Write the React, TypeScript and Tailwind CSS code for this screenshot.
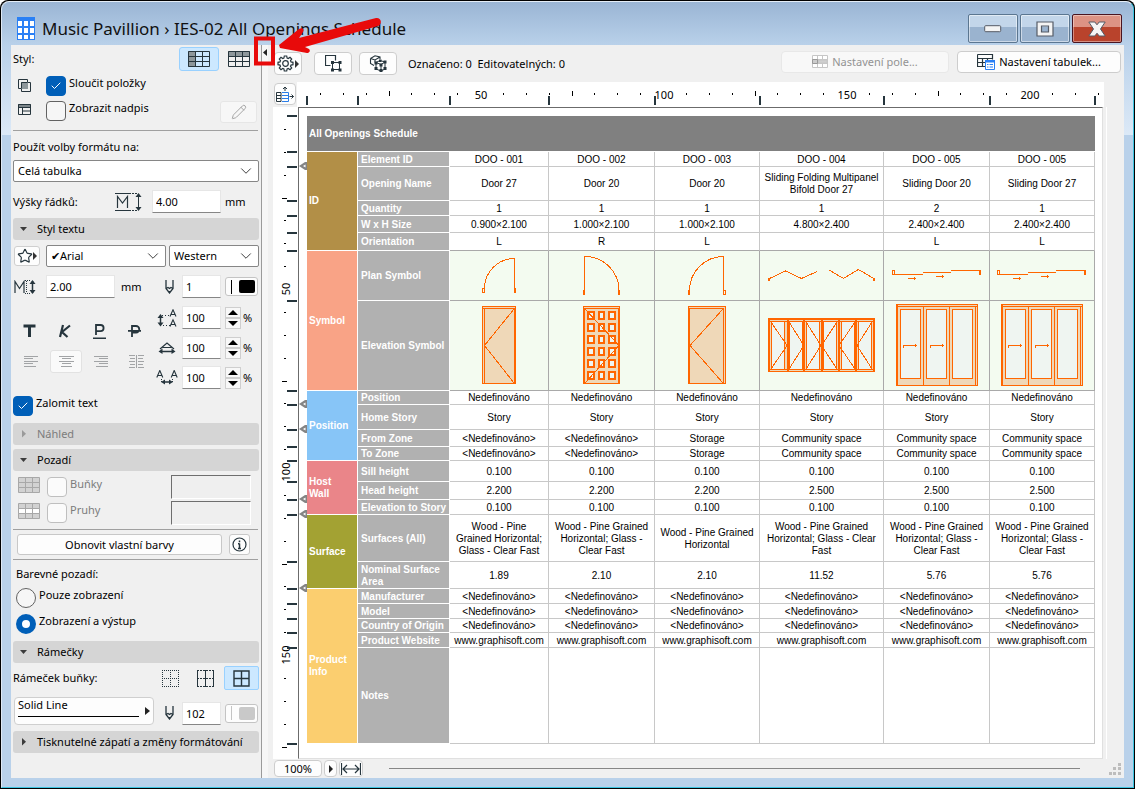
import React, { useState } from 'react';
import clsx from 'clsx';
import { Check, ChevronDown, Pencil, Star } from 'lucide-react';

const INK = '#26353d';
const ORANGE = '#ff6600';
const WOOD = '#efd8b8';
const GLASS = '#eff5f1';

/* ---------- small controls ---------- */

const Divider = () => <hr className="mr-px ml-0.5 border-t border-[#a0a0a0]" />;

interface SectionProps {
  title: string;
  open?: boolean;
  disabled?: boolean;
}

const SectionHeader: React.FC<SectionProps> = ({ title, open = false, disabled = false }) => (
  <button
    type="button"
    disabled={disabled}
    aria-expanded={open}
    className="ml-0.5 flex h-[22px] shrink-0 items-center rounded-[3px] bg-[#d5d5d5] pl-[7px] whitespace-nowrap disabled:text-[#7c7c7c]"
  >
    <svg width="8" height="8" viewBox="0 0 8 8" className={disabled ? 'fill-[#9a9a9a]' : 'fill-[#3c3c3c]'}>
      <path d={open ? 'M0 2h7L3.5 6z' : 'M2 0v7.5L6 3.8z'} />
    </svg>
    <span className="ml-[9px]">{title}</span>
  </button>
);

interface CheckboxProps {
  id: string;
  label: string;
  defaultChecked?: boolean;
  disabled?: boolean;
}

const Checkbox: React.FC<CheckboxProps> = ({ id, label, defaultChecked, disabled }) => (
  <div className="flex items-start">
    <span className="relative block size-5">
      <input
        id={id}
        type="checkbox"
        defaultChecked={defaultChecked}
        disabled={disabled}
        className="peer block size-5 appearance-none rounded-[4px] border border-[#626262] bg-[#f6f6f6] checked:border-[#005fb8] checked:bg-[#005fb8] disabled:border-[#bfbfbf] disabled:bg-[#fbfbfb]"
      />
      <Check
        size={12}
        strokeWidth={2}
        className="pointer-events-none absolute top-1 left-1 hidden text-white peer-checked:block"
      />
    </span>
    <label htmlFor={id} className={clsx('ml-[3px] leading-[14px]', disabled && 'text-[#7c7c7c]')}>
      {label}
    </label>
  </div>
);

interface SelectProps {
  label: string;
  options: string[];
  className?: string;
}

const Select: React.FC<SelectProps> = ({ label, options, className }) => (
  <span className={clsx('relative block', className)}>
    <select
      aria-label={label}
      className="block h-[22px] w-full appearance-none rounded-[2px] border border-[#868686] bg-white pl-1 text-black"
    >
      {options.map((option) => (
        <option key={option}>{option}</option>
      ))}
    </select>
    <ChevronDown size={18} strokeWidth={1.25} className="pointer-events-none absolute top-0.5 right-1 text-[#333]" />
  </span>
);

interface NumberBoxProps {
  label: string;
  value: string;
  className?: string;
}

const NumberBox: React.FC<NumberBoxProps> = ({ label, value, className }) => (
  <input
    aria-label={label}
    defaultValue={value}
    className={clsx('h-[23px] border border-[#e6e6e6] border-b-[#868686] bg-white pl-[3px]', className)}
  />
);

const Spinner = ({ label }: { label: string }) => (
  <span className="ml-1 flex w-4 flex-col">
    <button type="button" aria-label={`${label} +`} className="flex h-[11px] items-center justify-center border border-[#cfcfcf] bg-[#f8f8f8]">
      <svg width="10" height="5" viewBox="0 0 10 5"><path d="M0 5L5 0l5 5z" /></svg>
    </button>
    <button type="button" aria-label={`${label} -`} className="flex h-[11px] items-center justify-center border border-[#cfcfcf] bg-[#f8f8f8]">
      <svg width="10" height="5" viewBox="0 0 10 5"><path d="M0 0h10L5 5z" /></svg>
    </button>
  </span>
);

const PenColor = ({ label, muted = false }: { label: string; muted?: boolean }) => (
  <button
    type="button"
    aria-label={label}
    className="ml-1 flex h-[19px] w-[33px] items-center justify-between rounded-[3px] border border-[#c4c4c4] bg-[#fdfdfd] pr-0.5 pl-[5px]"
  >
    <span className={clsx('h-3.5 w-px', muted ? 'bg-[#c4c4c4]' : 'bg-black')} />
    <span className={clsx('h-[13px] w-4 rounded-[2px]', muted ? 'bg-[#c9c9c9]' : 'bg-black')} />
  </button>
);

/* ---------- icons ---------- */

const GridIcon = ({ variant }: { variant: 'left' | 'top' }) => (
  <svg width="22" height="16" viewBox="0 0 22 16" fill="none" stroke={INK}>
    <path d={variant === 'left' ? 'M0 0h8v16H0z' : 'M0 0h22v6H0z'} fill="#8e979b" stroke="none" />
    <path d="M.5.5h21v15H.5zM.5 5.5h21M.5 10.5h21M7.5.5v15M14.5.5v15" />
  </svg>
);

const MutedGrid = ({ stripes = false }: { stripes?: boolean }) => (
  <svg width="22" height="16" viewBox="0 0 22 16" fill="#d2d2d2" stroke="#a8a8a8">
    <path d="M.5.5h21v15H.5z" />
    {stripes && <path d="M.5 5.5h21v5H.5z" fill="#fff" />}
    <path d="M.5 5.5h21M.5 10.5h21M7.5.5v15M14.5.5v15" />
  </svg>
);

const MergeIcon = () => (
  <svg width="13" height="13" viewBox="0 0 13 13" fill="none" stroke={INK}>
    <path d="M3.500 9.500h-3v-9h9v3" />
    <path d="M3.500 3.500h9v9h-9z" />
    <path d="M3 3h7v7H3z" fill="#8e979b" stroke="none" />
    <path d="M3.500 9.500V3.500h6" />
  </svg>
);

const TitleRowIcon = () => (
  <svg width="13" height="11" viewBox="0 0 13 11" fill="none" stroke={INK}>
    <path d="M0 0h13v4H0z" fill="#7d868a" stroke="none" />
    <path d="M.5.5h12v10H.5zM.5 3.500h12M4.500 3.500v7M4.500 7h8" />
  </svg>
);

const PenIcon = () => (
  <svg width="9" height="14" viewBox="0 0 9 14" fill="none" stroke={INK} strokeWidth="1.300">
    <path d="M1 0v8.500L4.500 13 8 8.500V0M1 8.500l2-1 1.500 1 1.500-1 2 1M4.500 11v2" />
  </svg>
);

const RowHeightIcon = () => (
  <svg width="27" height="18" viewBox="0 0 27 18" fill="none" stroke={INK}>
    <path d="M0 .5h14M0 17.500h14" />
    <path d="M14 .5h9M14 17.500h9" strokeDasharray="2 1" />
    <path d="M2.500 15V3.500L7.500 10l5-6.500V15" strokeWidth="1.200" />
    <path d="M23.500 2v14" />
    <path d="M20.500 4l3-4 3 4zM20.500 14l3 4 3-4z" fill={INK} stroke="none" />
  </svg>
);

const TextHeightIcon = () => (
  <svg width="22" height="14" viewBox="0 0 22 14" fill="none" stroke={INK}>
    <path d="M1 13V1.500l4.500 7 4.500-7V13" strokeWidth="1.200" />
    <path d="M11 .5h6M11 13.500h6" strokeDasharray="1 1" />
    <path d="M12.500 1v12" strokeDasharray="1 1" />
    <path d="M18.500 1v12" strokeWidth="1.500" />
    <path d="M15.500 4l3-4 3 4zM15.500 10l3 4 3-4z" fill={INK} stroke="none" />
  </svg>
);

const LineSpacingIcon = () => (
  <svg width="21" height="18" viewBox="0 0 21 18" fill="none" stroke={INK}>
    <path d="M13 7.500L16 .8l3 6.700M14 5.500h4M13 17.500l3-6.700 3 6.700M14 15.500h4" strokeWidth="1.100" />
    <path d="M5 6.500h8M6 16.500h7" strokeDasharray="1 2" />
    <path d="M3.500 8v7" strokeWidth="1.500" />
    <path d="M.5 9l3-4 3 4zM.5 13.500l3 4 3-4z" fill={INK} stroke="none" />
  </svg>
);

const WidthFactorIcon = () => (
  <svg width="18" height="12" viewBox="0 0 18 12" fill="none" stroke={INK}>
    <path d="M2 7L9 1l7 6M4.500 5.500h9" strokeWidth="1.200" />
    <path d="M3 9.500h12" strokeWidth="1.500" />
    <path d="M4.500 6.500l-4 3 4 2.500zM13.500 6.500l4 3-4 2.500z" fill={INK} stroke="none" />
  </svg>
);

const CharSpacingIcon = () => (
  <svg width="22" height="15" viewBox="0 0 22 15" fill="none" stroke={INK}>
    <path d="M.8 7.500l3-7 3 7M2 5.500h4M15.200 7.500l3-7 3 7M16.200 5.500h4" strokeWidth="1.100" />
    <path d="M5.500 9v3M16.500 9v3" strokeDasharray="1 1" />
    <path d="M7 12h8" strokeWidth="1.500" />
    <path d="M9 9.500l-4 2.500 4 2.500zM13 9.500l4 2.500-4 2.500z" fill={INK} stroke="none" />
  </svg>
);

const AlignIcon = ({ d }: { d: string }) => (
  <svg width="15" height="13" viewBox="0 0 15 13" fill="none" stroke="#a2a4a6">
    <path d={d} />
  </svg>
);

const BorderIcon = ({ variant }: { variant: 'none' | 'columns' | 'all' }) => (
  <svg width="17" height="17" viewBox="0 0 17 17" fill="none" stroke={INK}>
    {variant === 'none' && <path d="M.5 0v17M8.500 0v17M16.500 0v17M0 .5h17M0 8.500h17M0 16.500h17" strokeDasharray="1 1" />}
    {variant === 'columns' && (
      <>
        <path d="M0 .5h17M0 8.500h17M0 16.500h17" strokeDasharray="2 1" />
        <path d="M.5 0v17M8.500 0v17M16.500 0v17" />
      </>
    )}
    {variant === 'all' && <path d="M1 1h15v15H1zM8.500 1v15M1 8.500h15" strokeWidth="1.400" />}
  </svg>
);

const GearIcon = () => (
  <svg width="17" height="17" viewBox="0 0 17 17" fill="none" stroke={INK} strokeWidth="1.200">
    <path d="M7.300 1h2.400l.4 2 1.200.5 1.700-1.200L14.700 4l-1.200 1.700.5 1.200 2 .4v2.400l-2 .4-.5 1.200 1.200 1.700-1.700 1.700-1.700-1.200-1.200.5-.4 2H7.300l-.4-2-1.200-.5L4 14.700 2.300 13l1.200-1.700L3 10.100l-2-.4V7.300l2-.4.5-1.200L2.300 4 4 2.300l1.700 1.200L6.900 3z" />
    <circle cx="8.500" cy="8.500" r="2.800" />
  </svg>
);

const SelectPlanIcon = () => (
  <svg width="17" height="17" viewBox="0 0 17 17" fill="none" stroke={INK}>
    <path d="M5.500 10.500h-5V.5h10v5" strokeWidth="1.200" />
    <path d="M7.500 7.500h7v7h-7z" />
    <path d="M6 6h3v3H6zM13.500 6h3v3h-3zM6 13.500h3v3H6zM13.500 13.500h3v3h-3z" fill={INK} stroke="none" />
  </svg>
);

const SelectModelIcon = () => (
  <svg width="18" height="17" viewBox="0 0 18 17" fill="none" stroke={INK}>
    <path d="M1.500 3.500L6 .8l5 1.200v2M1.500 3.500L6 5l5-3M1.500 3.500v5L5 10.500M6 5v2.500" strokeWidth="1.100" />
    <path d="M7 7.500l4-2 5 1.500v7l-4 2-5-2zM7 7.500l5 2v6.500M12 9.500l4-2.500" />
    <path d="M5.500 6.500h3v3h-3zM10 4.500h2.500V7H10zM14.500 5.500h3v3h-3zM10.500 8.500h3v3h-3zM5.500 12h3v3h-3zM10.500 14h3v3h-3zM14.500 12h3v3h-3z" fill={INK} stroke="none" />
  </svg>
);

const OrientationIcon = () => (
  <svg width="18" height="16" viewBox="0 0 18 16" fill="none">
    <path d="M6 6.500h6.500v9H6M6 9.500h6.500M6 12.500h6.500" stroke="#2a7de8" />
    <path d="M.5 6.500H5v9H.5zM.5 9.500H5M.5 12.500H5M9 5V1M7 3l2-2 2 2M13.500 10.500h4M15.500 8.500l2 2-2 2" stroke={INK} />
  </svg>
);

const FieldSettingsIcon = () => (
  <svg width="16" height="13" viewBox="0 0 16 13" fill="#fff" stroke="#c6c6c6">
    <path d="M.5.5h15v12H.5zM.5 4.500h15M.5 8.500h15M5.500.5v12M10.500.5v12" />
    <path d="M6 5h9v3H6z" fill="#cfcfcf" />
    <path d="M.5 4.500h5v4h-5z" fill="#ccc" stroke="#999" />
  </svg>
);

const TableSettingsIcon = () => (
  <svg width="18" height="16" viewBox="0 0 18 16" fill="none">
    <path d="M.5.5h15v5M.5.5v12H8M.5 4.500h15M.5 8.500H8M5.500 4.500v8M10.500 4.500v2" stroke={INK} strokeWidth="1.200" />
    <path d="M8.500 6.500h9v9h-9z" fill="#fff" stroke="#2a80f5" />
    <path d="M8 6h10v2.500H8zM10 10h1.500v1H10zM12.500 10H16v1h-3.500zM10 12.500h1.500v1H10zM12.500 12.500H16v1h-3.500z" fill="#2a80f5" />
  </svg>
);

/* ---------- door symbols ---------- */

interface SymbolFrameProps {
  width: number;
  height: number;
  children: React.ReactNode;
}

const SymbolFrame: React.FC<SymbolFrameProps> = ({ width, height, children }) => (
  <svg
    width={width}
    height={height}
    viewBox={`0 0 ${width} ${height}`}
    fill="none"
    stroke={ORANGE}
    shapeRendering="crispEdges"
    className="block"
  >
    {children}
  </svg>
);

const SlidingPlan = () => (
  <>
    <path d="M8.500 19.500h2v4h-2zM8 23.500h31M39 21.500h28M67 19.500h30" />
    <path d="M96 19v5" strokeWidth="2" />
    <path d="M24 27.500h8M30.500 26v3M52 25.500h8M58.500 24v3" />
  </>
);

const SlidingElevation = () => (
  <>
    <path d="M12.500 3.500h81v81h-81z" fill={WOOD} />
    <path d="M13 3v82M12 5.500h81M39.500 5.500v79M65.500 5.500v79M91.500 5.500v79" />
    <path d="M13 5v80" strokeWidth="2" />
    <path d="M16.500 8.500h20v69h-20zM42.500 8.500h20v69h-20zM68.500 8.500h20v69h-20z" fill={GLASS} />
    <path d="M19.500 47v-2.500h13M31.500 43v3M46.500 47v-2.500h13M58.500 43v3" />
  </>
);

const planSymbols = [
  <SymbolFrame key="1" width={98} height={49}>
    <path d="M34.500 37A30 30 0 0 1 64.500 7.500V41M32.500 37.500h2v4h-2z" />
    <path d="M65 37v5" strokeWidth="2" />
  </SymbolFrame>,
  <SymbolFrame key="2" width={105} height={49}>
    <path d="M70 39A34 34 0 0 0 35.500 5.500V44" />
    <path d="M35 39v5M70 39v5" strokeWidth="2" />
  </SymbolFrame>,
  <SymbolFrame key="3" width={104} height={49}>
    <path d="M34.500 39A34 34 0 0 1 68.500 5.500V44M68.500 39.500h2v4h-2z" />
    <path d="M34 39v5" strokeWidth="2" />
  </SymbolFrame>,
  <SymbolFrame key="4" width={123} height={49}>
    <path d="M8.500 28L25.500 20 41.500 27.500 57 20.500M69 19l14.500 8.500L98.500 18.500l16 9.500" />
    <path d="M9 27v3M114 27v3" strokeWidth="2" />
  </SymbolFrame>,
  <SymbolFrame key="5" width={105} height={49}>
    <SlidingPlan />
  </SymbolFrame>,
  <SymbolFrame key="6" width={104} height={49}>
    <g transform="translate(-1)">
      <SlidingPlan />
    </g>
  </SymbolFrame>,
];

const elevationSymbols = [
  <SymbolFrame key="1" width={98} height={89}>
    <path d="M32.500 5.500h33v77h-33z" fill={WOOD} />
    <path d="M32 7.500h33M34.500 8v75M64 8L34.500 44.500 64 82" />
    <path d="M65 7v76" strokeWidth="2" />
  </SymbolFrame>,
  <SymbolFrame key="2" width={105} height={89}>
    <path d="M34.500 5.500h36v77h-36z" fill={WOOD} />
    <path d="M34 7.500h36" />
    <path d="M35 7v76M70 7v76" strokeWidth="2" />
    <g fill={GLASS} strokeWidth="2">
      {[11, 23, 35, 47, 59, 71].map((y) => (
        <path key={y} d={`M39 ${y}h6v7h-6zM50 ${y}h5v7h-5zM60 ${y}h6v7h-6z`} />
      ))}
    </g>
    <path d="M36 8l34 36.500L36 82" />
  </SymbolFrame>,
  <SymbolFrame key="3" width={104} height={89}>
    <path d="M33.500 5.500h37v77h-37z" fill={WOOD} />
    <path d="M33 7.500h36M68.500 8v75M68 8L35 44.500 68 82" />
    <path d="M34 7v76" strokeWidth="2" />
  </SymbolFrame>,
  <SymbolFrame key="4" width={123} height={89}>
    <path d="M8.500 17.500h106v53h-106z" fill={WOOD} />
    <path d="M8 18h107M9 17v54M114 17v54" strokeWidth="2" />
    <path d="M9 20.500h105M9 68.500h105" />
    <g fill={GLASS}>
      {[11, 29, 46, 63, 81, 98].map((x) => (
        <path key={x} d={`M${x + 0.5} 20.500h13v48h-13z`} />
      ))}
    </g>
    <path d="M28 19v52M44 19v52M61.500 19v52M79 19v52M96 19v52" strokeWidth="2" />
    <path d="M11 21l16 23.500L11 68M29 21l15 23.500L29 68M46 21l15 23.500L46 68M77 21L61.500 44.500 77 68M95 21L79 44.500 95 68M112 21L97 44.500 112 68" />
  </SymbolFrame>,
  <SymbolFrame key="5" width={105} height={89}>
    <SlidingElevation />
  </SymbolFrame>,
  <SymbolFrame key="6" width={104} height={89}>
    <g transform="translate(-1)">
      <SlidingElevation />
    </g>
  </SymbolFrame>,
];

/* ---------- schedule data ---------- */

interface ScheduleRow {
  label: string;
  height: number;
  cells: React.ReactNode[];
  symbol?: boolean;
}

interface ScheduleGroup {
  title: string;
  color: string;
  rows: ScheduleRow[];
}

const same = (value: string) => Array<string>(6).fill(value);
const undef = '<Nedefinováno>';

const groups: ScheduleGroup[] = [
  {
    title: 'ID',
    color: 'bg-[#b28f47]',
    rows: [
      { label: 'Element ID', height: 15, cells: ['DOO - 001', 'DOO - 002', 'DOO - 003', 'DOO - 004', 'DOO - 005', 'DOO - 005'] },
      { label: 'Opening Name', height: 34, cells: ['Door 27', 'Door 20', 'Door 20', 'Sliding Folding Multipanel Bifold Door 27', 'Sliding Door 20', 'Sliding Door 27'] },
      { label: 'Quantity', height: 15, cells: ['1', '1', '1', '1', '2', '1'] },
      { label: 'W x H Size', height: 17, cells: ['0.900×2.100', '1.000×2.100', '1.000×2.100', '4.800×2.400', '2.400×2.400', '2.400×2.400'] },
      { label: 'Orientation', height: 18, cells: ['L', 'R', 'L', '', 'L', 'L'] },
    ],
  },
  {
    title: 'Symbol',
    color: 'bg-[#f9a386]',
    rows: [
      { label: 'Plan Symbol', height: 50, cells: planSymbols, symbol: true },
      { label: 'Elevation Symbol', height: 90, cells: elevationSymbols, symbol: true },
    ],
  },
  {
    title: 'Position',
    color: 'bg-[#87c5f7]',
    rows: [
      { label: 'Position', height: 14, cells: same('Nedefinováno') },
      { label: 'Home Story', height: 25, cells: same('Story') },
      { label: 'From Zone', height: 17, cells: [undef, undef, 'Storage', 'Community space', 'Community space', 'Community space'] },
      { label: 'To Zone', height: 14, cells: [undef, undef, 'Storage', 'Community space', 'Community space', 'Community space'] },
    ],
  },
  {
    title: 'Host Wall',
    color: 'bg-[#ea8589]',
    rows: [
      { label: 'Sill height', height: 21, cells: same('0.100') },
      { label: 'Head height', height: 18, cells: ['2.200', '2.200', '2.200', '2.500', '2.500', '2.500'] },
      { label: 'Elevation to Story', height: 15, cells: same('0.100') },
    ],
  },
  {
    title: 'Surface',
    color: 'bg-[#a3a233]',
    rows: [
      {
        label: 'Surfaces (All)',
        height: 47,
        cells: [
          'Wood - Pine Grained Horizontal; Glass - Clear Fast',
          'Wood - Pine Grained Horizontal; Glass - Clear Fast',
          'Wood - Pine Grained Horizontal',
          'Wood - Pine Grained Horizontal; Glass - Clear Fast',
          'Wood - Pine Grained Horizontal; Glass - Clear Fast',
          'Wood - Pine Grained Horizontal; Glass - Clear Fast',
        ],
      },
      { label: 'Nominal Surface Area', height: 27, cells: ['1.89', '2.10', '2.10', '11.52', '5.76', '5.76'] },
    ],
  },
  {
    title: 'Product Info',
    color: 'bg-[#fbce6f]',
    rows: [
      { label: 'Manufacturer', height: 15, cells: same(undef) },
      { label: 'Model', height: 15, cells: same(undef) },
      { label: 'Country of Origin', height: 14, cells: same(undef) },
      { label: 'Product Website', height: 15, cells: same('www.graphisoft.com') },
      { label: 'Notes', height: 96, cells: same('') },
    ],
  },
];

const columnWidths = [51, 92, 99, 106, 105, 124, 106, 105];
const TITLE_HEIGHT = 36;

const runningTotals = (start: number, sizes: number[]) =>
  sizes.reduce<number[]>((acc, size) => [...acc, acc[acc.length - 1] + size], [start]);

const columnEdges = runningTotals(9, columnWidths);
const rowEdges = runningTotals(9, [TITLE_HEIGHT, ...groups.flatMap((g) => g.rows.map((r) => r.height))]);

/* ---------- rulers ---------- */

const STEP = 22.875;

const HorizontalRuler = () => (
  <svg width="807" height="25" viewBox="0 0 807 25" shapeRendering="crispEdges">
    {Array.from({ length: 35 }, (_, i) => i - 7).map((k) => {
      const x = Math.round(183 + k * STEP);
      if (k % 8 === 0) {
        return (
          <text key={k} x={x + 1} y="17" textAnchor="middle" fontSize="11">
            {50 + (k / 8) * 50}
          </text>
        );
      }
      return k % 4 === 0 ? (
        <rect key={k} x={x} y="9" width="1" height="5" />
      ) : (
        <rect key={k} x={x} y="11" width="1" height="2" />
      );
    })}
    {columnEdges.map((x) => (
      <rect key={x} x={x} y="14" width="2" height="9" fill={INK} />
    ))}
  </svg>
);

const VerticalRuler = () => (
  <svg width="25" height="652" viewBox="0 0 25 652" shapeRendering="crispEdges">
    {Array.from({ length: 28 }, (_, i) => i - 7).map((k) => {
      const y = Math.round(182 + k * STEP);
      if (k % 8 === 0) {
        return (
          <text key={k} x="17" y={y} textAnchor="middle" fontSize="11" transform={`rotate(-90 17 ${y})`}>
            {50 + (k / 8) * 50}
          </text>
        );
      }
      return k % 4 === 0 ? (
        <rect key={k} x="9" y={y} width="5" height="1" />
      ) : (
        <rect key={k} x="11" y={y} width="2" height="1" />
      );
    })}
    {rowEdges.map((y) => (
      <rect key={y} x="14" y={y - 1} width="10" height="2" fill={INK} />
    ))}
  </svg>
);

// Handles that mark rows whose height was changed by hand.
const RowHandles = () => (
  <svg width="8" height="628" viewBox="0 0 8 628" className="shrink-0">
    {[50, 288, 313, 383, 398, 472].map((y) => (
      <g key={y} fill="#848484">
        <path d={`M0 ${y}l6-4h2v8H6z`} />
        <path d={`M4 ${y}l2.500-1.500v3z`} fill="#fff" />
      </g>
    ))}
  </svg>
);

const Schedule = () => (
  <table className="w-[788px] table-fixed border-separate border-spacing-0 font-['Liberation_Sans',Arial,sans-serif] text-[10px] leading-[12px]">
    <colgroup>
      {columnWidths.map((width, i) => (
        <col key={i} style={{ width }} />
      ))}
    </colgroup>
    <thead>
      <tr style={{ height: TITLE_HEIGHT }}>
        <th colSpan={8} className="border-b border-white bg-[#808080] p-0 pl-0.5 text-left text-white">
          All Openings Schedule
        </th>
      </tr>
    </thead>
    <tbody>
      {groups.map((group) =>
        group.rows.map((row, i) => (
          <tr key={row.label} style={{ height: row.height }}>
            {i === 0 && (
              <th
                rowSpan={group.rows.length}
                scope="rowgroup"
                className={clsx('border-r border-b border-white p-0 pr-2 pl-0.5 text-left text-white', group.color)}
              >
                {group.title}
              </th>
            )}
            <th scope="row" className="border-r border-b border-white bg-[#b1b1b1] p-0 pt-px pl-[3px] text-left text-white">
              {row.label}
            </th>
            {row.cells.map((cell, c) => (
              <td
                key={c}
                className={clsx(
                  'border-r border-b text-center text-black',
                  row.symbol ? 'border-[#a9a9a9] bg-[#f3fbf0] p-0' : 'border-[#c8c8c8] px-1 pt-px pb-0',
                  row.label === 'Orientation' && 'border-b-[#a9a9a9]'
                )}
              >
                {cell}
              </td>
            ))}
          </tr>
        ))
      )}
    </tbody>
  </table>
);

/* ---------- left panel ---------- */

const formatButtons = [
  { label: 'Bold', glyph: <path d="M.5 3h12M6.500 3v11" strokeWidth="3" /> },
  { label: 'Italic', glyph: <path d="M5 2L2 14M12 2.500L4 9l5.500 5" strokeWidth="2.200" /> },
  { label: 'Underline', glyph: <path d="M3 12V2h4.500a3 3 0 0 1 0 6.200H3M0 15.300h13" strokeWidth="1.800" /> },
  { label: 'Strikethrough', glyph: <path d="M4 14V3h4a3 3 0 0 1 0 6.500H4M0 7.800h13" strokeWidth="1.800" /> },
];

const alignments = [
  { label: 'Left', d: 'M0 1.500h14M0 3.500h9M0 6.500h14M0 8.500h9M0 11.500h12' },
  { label: 'Center', d: 'M0 1.500h15M3 3.500h9M0 6.500h15M3 8.500h9M2 11.500h11' },
  { label: 'Right', d: 'M0 1.500h14M5 3.500h9M0 6.500h14M5 8.500h9M2 11.500h12' },
  { label: 'Justify', d: 'M0 .5h6M9 .5h6M1 3.500h5M9 3.500h5M0 6.500h6M9 6.500h6M1 9.500h5M9 9.500h5M0 12.500h6M9 12.500h6M7.500 0v13' },
];

const spacings = [
  { label: 'Line spacing', icon: <LineSpacingIcon /> },
  { label: 'Width factor', icon: <WidthFactorIcon /> },
  { label: 'Character spacing', icon: <CharSpacingIcon /> },
];

const StylePanel = () => {
  const [align, setAlign] = useState('Center');

  return (
    <aside className="flex w-[251px] shrink-0 flex-col border-r border-[#9a9a9a] pr-0.5">
      <div className="flex h-[31px] items-start pt-0.5 pl-0.5">
        <span className="mt-1">Styl:</span>
        <button type="button" aria-label="Styl 1" aria-pressed="true" className="ml-auto flex h-6 w-10 items-center justify-center rounded-[3px] border border-[#99d1ff] bg-[#cce8ff]">
          <GridIcon variant="left" />
        </button>
        <button type="button" aria-label="Styl 2" className="flex h-6 w-10 items-center justify-center">
          <GridIcon variant="top" />
        </button>
      </div>
      <div className="flex h-[25px] pl-[7px]">
        <span className="mt-[3px] mr-[15px] w-[13px]"><MergeIcon /></span>
        <Checkbox id="merge" label="Sloučit položky" defaultChecked />
      </div>
      <div className="flex h-[29px] pl-[7px]">
        <span className="mt-[3px] mr-[15px] w-[13px]"><TitleRowIcon /></span>
        <Checkbox id="headline" label="Zobrazit nadpis" />
        <button type="button" disabled aria-label="Upravit" className="mr-0.5 ml-auto flex h-[22px] w-[37px] items-center justify-center rounded-[3px] border border-[#e6e6e6] bg-[#f7f7f7] text-[#a5a5a5]">
          <Pencil size={16} strokeWidth={1.5} />
        </button>
      </div>
      <Divider />
      <p className="mt-2 pl-0.5">Použít volby formátu na:</p>
      <Select label="Použít volby formátu na" options={['Celá tabulka']} className="mt-[5px] ml-0.5" />
      <div className="mt-2 flex items-center pl-0.5">
        <span className="w-[102px]">Výšky řádků:</span>
        <RowHeightIcon />
        <NumberBox label="Výšky řádků" value="4.00" className="ml-2.5 w-[69px]" />
        <span className="ml-1">mm</span>
      </div>
      <div className="mt-[5px] flex flex-col">
        <SectionHeader title="Styl textu" open />
      </div>

      <div className="mt-[5px] flex items-center pl-[3px]">
        <button type="button" aria-label="Oblíbené" className="flex h-5 w-[26px] items-center justify-center rounded-[3px] border border-[#cfcfcf] bg-[#fdfdfd]">
          <Star size={16} strokeWidth={1.75} color={INK} />
          <svg width="4" height="8" viewBox="0 0 4 8"><path d="M0 0v8l4-4z" fill="#333" /></svg>
        </button>
        <Select label="Písmo" options={['✔Arial']} className="ml-1.5 w-[120px]" />
        <Select label="Kódování" options={['Western']} className="ml-[3px] flex-1" />
      </div>

      <div className="mt-2 flex items-center pl-[3px]">
        <TextHeightIcon />
        <NumberBox label="Velikost textu" value="2.00" className="ml-2.5 w-[69px]" />
        <span className="ml-1.5">mm</span>
        <span className="ml-auto"><PenIcon /></span>
        <NumberBox label="Pero textu" value="1" className="ml-2 w-[39px]" />
        <PenColor label="Barva pera textu" />
        <span className="w-px" />
      </div>

      <div className="mt-2 flex">
        <div className="flex w-[142px] flex-col pt-4">
          <div className="flex gap-[22px] pl-3">
            {formatButtons.map(({ label, glyph }) => (
              <button key={label} type="button" aria-label={label} className="flex h-[18px] w-[13px] items-center">
                <svg width="13" height="16" viewBox="0 0 13 16" fill="none" stroke={INK}>{glyph}</svg>
              </button>
            ))}
          </div>
          <div className="mt-2.5 flex justify-between pl-1">
            {alignments.map(({ label, d }) => (
              <button
                key={label}
                type="button"
                aria-label={label}
                aria-pressed={align === label}
                onClick={() => setAlign(label)}
                className={clsx(
                  'flex h-[23px] w-8 items-center justify-center rounded-[3px] border',
                  align === label ? 'border-[#e2e2e2] bg-[#fafafa]' : 'border-transparent'
                )}
              >
                <AlignIcon d={d} />
              </button>
            ))}
          </div>
        </div>
        <div className="flex flex-1 flex-col gap-[7px]">
          {spacings.map(({ label, icon }) => (
            <div key={label} className="flex items-center">
              <span className="flex w-[29px] justify-center pr-px">{icon}</span>
              <NumberBox label={label} value="100" className="w-[39px]" />
              <Spinner label={label} />
              <span className="ml-0.5">%</span>
            </div>
          ))}
        </div>
      </div>

      <div className="mt-[7px] pl-0.5">
        <Checkbox id="wrap" label="Zalomit text" defaultChecked />
      </div>

      <div className="mt-[7px] flex flex-col gap-1">
        <SectionHeader title="Náhled" disabled />
        <SectionHeader title="Pozadí" open />
      </div>

      <div className="mt-1 flex h-[26px] pl-[7px]">
        <span className="mt-0.5 mr-[7px]"><MutedGrid /></span>
        <span className="mt-0.5"><Checkbox id="cells" label="Buňky" disabled /></span>
        <button type="button" disabled aria-label="Barva buněk" className="mr-2 ml-auto h-6 w-20 border border-t-[#6e6e6e] border-r-white border-b-white border-l-[#6e6e6e] bg-[#efefef]" />
      </div>
      <div className="flex h-7 pl-[7px]">
        <span className="mt-0.5 mr-[7px]"><MutedGrid stripes /></span>
        <span className="mt-0.5"><Checkbox id="stripes" label="Pruhy" disabled /></span>
        <button type="button" disabled aria-label="Barva pruhů" className="mr-2 ml-auto h-6 w-20 border border-t-[#6e6e6e] border-r-white border-b-white border-l-[#6e6e6e] bg-[#efefef]" />
      </div>
      <Divider />
      <div className="flex items-center py-1 pr-[9px] pl-1.5">
        <button type="button" className="h-[21px] flex-1 rounded-[3px] border border-[#c8c8c8] bg-[#fdfdfd]">
          Obnovit vlastní barvy
        </button>
        <button type="button" aria-label="Info" className="ml-[7px] flex size-[21px] items-center justify-center rounded-[3px] border border-[#c8c8c8] bg-[#fdfdfd]">
          <svg width="15" height="15" viewBox="0 0 15 15" fill="none" stroke={INK}>
            <circle cx="7.500" cy="7.500" r="6.500" strokeWidth="1.200" />
            <path d="M7.500 3.500v1.800M7.500 6.500v5M6 6.800h1.500M6 11.500h3" strokeWidth="1.500" />
          </svg>
        </button>
      </div>
      <Divider />

      <fieldset className="mt-0.5 pl-[5px]">
        <legend className="pt-1">Barevné pozadí:</legend>
        {['Pouze zobrazení', 'Zobrazení a výstup'].map((text, i) => (
          <div key={text} className="mt-1.5 flex items-start">
            <input
              id={`bg-${i}`}
              name="background"
              type="radio"
              defaultChecked={i === 1}
              className="size-5 appearance-none rounded-full border border-[#626262] bg-[#f6f6f6] checked:border-[6px] checked:border-[#005fb8] checked:bg-white"
            />
            <label htmlFor={`bg-${i}`} className="ml-[3px] leading-[14px]">{text}</label>
          </div>
        ))}
      </fieldset>

      <div className="mt-[7px] flex flex-col">
        <SectionHeader title="Rámečky" open />
      </div>
      <div className="mt-[3px] flex items-center pl-0.5">
        <span className="mr-auto">Rámeček buňky:</span>
        <button type="button" aria-label="Bez rámečku" className="mr-[18px]"><BorderIcon variant="none" /></button>
        <button type="button" aria-label="Sloupce" className="mr-2.5"><BorderIcon variant="columns" /></button>
        <button type="button" aria-label="Vše" aria-pressed="true" className="flex h-6 w-[35px] items-center justify-center rounded-[2px] border border-[#99d1ff] bg-[#cce8ff]">
          <BorderIcon variant="all" />
        </button>
      </div>
      <div className="mt-[7px] flex items-center pl-[3px]">
        <button type="button" className="flex h-7 w-[140px] items-center rounded-[4px] border border-[#cfcfcf] bg-[#fdfdfd] pr-[3px] pl-[3px] text-left">
          <span className="flex-1 self-start border-b border-black pb-1 leading-[14px]">Solid Line</span>
          <svg width="5" height="8" viewBox="0 0 5 8" className="ml-1.5"><path d="M0 0v8l5-4z" fill="#222" /></svg>
        </button>
        <span className="mt-1 ml-auto"><PenIcon /></span>
        <NumberBox label="Pero rámečku" value="102" className="mt-1 ml-2 w-[39px]" />
        <span className="mt-1"><PenColor label="Barva pera rámečku" muted /></span>
        <span className="w-px" />
      </div>
      <div className="mt-[6px] flex flex-col">
        <SectionHeader title="Tisknutelné zápatí a změny formátování" />
      </div>
    </aside>
  );
};

/* ---------- window ---------- */

const toolButton = 'flex items-center justify-center rounded-[4px] border border-[#cdcdcd] bg-[#fdfdfd]';

const TitleBar = () => (
  <header className="flex h-[43px] items-center justify-between pr-[11px] pl-[15px]">
    <div className="flex items-center pt-2.5">
      <svg width="18" height="23" viewBox="0 0 18 23">
        <path d="M0 0h18v23H0z" fill="#2a80f5" />
        <path d="M1 4h4v5H1zM7 4h4v5H7zM13 4h4v5h-4zM1 11h4v5H1zM7 11h4v5H7zM13 11h4v5h-4zM1 18h4v4H1zM7 18h4v4H7zM13 18h4v4h-4z" fill="#fff" />
      </svg>
      <h1 className="ml-[7px] text-[17px] leading-6 text-[#111]">Music Pavillion › IES-02 All Openings Schedule</h1>
    </div>
    <div className="flex gap-0.5 pt-2.5">
      <button type="button" aria-label="Minimize" className="flex h-[29px] w-[50px] items-center justify-center rounded-[2px] border border-[#5b7690] bg-linear-to-b from-[#c3d6ea] from-45% to-[#9ab3cf] to-45% inset-ring inset-ring-white/50">
        <svg width="18" height="8" viewBox="0 0 18 8"><rect x=".7" y=".7" width="16" height="6" rx="1" fill="#f4f4f4" stroke="#555b66" /></svg>
      </button>
      <button type="button" aria-label="Maximize" className="flex h-[29px] w-[50px] items-center justify-center rounded-[2px] border border-[#5b7690] bg-linear-to-b from-[#c3d6ea] from-45% to-[#9ab3cf] to-45% inset-ring inset-ring-white/50">
        <svg width="18" height="16" viewBox="0 0 18 16">
          <path d="M1 1h16v14H1zM5.500 5v6h7V5z" fillRule="evenodd" fill="#f4f4f4" stroke="#555b66" strokeWidth="1.200" />
        </svg>
      </button>
      <button type="button" aria-label="Close" className="flex h-[29px] w-[50px] items-center justify-center rounded-[2px] border border-[#4a1420] bg-linear-to-b from-[#dd9384] from-45% to-[#b9432c] to-45% inset-ring inset-ring-white/40">
        <svg width="18" height="16" viewBox="0 0 18 16">
          <path d="M.8 1h6L9 3.800 11.200 1h6L12.500 8l4.700 7h-6L9 12.200 6.800 15h-6L5.500 8z" fill="#f6f6f6" stroke="#555b66" strokeLinejoin="round" />
        </svg>
      </button>
    </div>
  </header>
);

const Toolbar = () => (
  <div className="flex h-[37px] items-center pr-[3px] pl-1.5">
    <button type="button" aria-label="Nastavení" className={clsx(toolButton, 'h-[23px] w-7 gap-px')}>
      <GearIcon />
      <svg width="4" height="8" viewBox="0 0 4 8"><path d="M0 0v8l4-4z" fill="#333" /></svg>
    </button>
    <button type="button" aria-label="Vybrat v půdorysu" className={clsx(toolButton, 'ml-3 h-[23px] w-[38px]')}>
      <SelectPlanIcon />
    </button>
    <button type="button" aria-label="Vybrat ve 3D" className={clsx(toolButton, 'ml-[7px] h-[23px] w-[38px]')}>
      <SelectModelIcon />
    </button>
    <span className="ml-[11px] whitespace-pre">Označeno: 0  Editovatelných: 0</span>
    <button type="button" disabled className="mr-2 mb-1 ml-auto flex h-[22px] w-[168px] items-center justify-center gap-1 rounded-[4px] border border-[#e8e8e8] bg-[#f8f8f8] text-[#939393]">
      <FieldSettingsIcon />
      Nastavení pole...
    </button>
    <button type="button" className={clsx(toolButton, 'mb-1 h-[22px] w-[164px] gap-1')}>
      <TableSettingsIcon />
      Nastavení tabulek...
    </button>
  </div>
);

const StatusBar = () => (
  <footer className="flex h-[19px] items-center pr-[3px] pl-1.5">
    <button type="button" className={clsx(toolButton, 'h-[17px] w-12')}>100%</button>
    <button type="button" aria-label="Zvětšení" className={clsx(toolButton, 'ml-0.5 h-[17px] w-[13px]')}>
      <svg width="4" height="8" viewBox="0 0 4 8"><path d="M0 0v8l4-4z" fill="#222" /></svg>
    </button>
    <button type="button" aria-label="Na šířku okna" className={clsx(toolButton, 'ml-0.5 h-[17px] w-6')}>
      <svg width="20" height="12" viewBox="0 0 20 12" fill="none" stroke={INK}>
        <path d="M.5 0v12M19.500 0v12M2 6h16M6 2L2 6l4 4M14 2l4 4-4 4" strokeWidth="1.200" />
      </svg>
    </button>
    <span className="ml-[26px] h-px flex-1 bg-[#868686]" />
    <svg width="12" height="12" viewBox="0 0 12 12" fill="#bdbdbd" className="ml-[29px]">
      <path d="M9 0h3v3H9zM4 4h3v3H4zM9 4h3v3H9zM0 9h3v3H0zM4 9h3v3H4zM9 9h3v3H9z" />
    </svg>
  </footer>
);

const App: React.FC = () => (
  <div className="relative min-h-screen rounded-t-lg bg-black p-px font-['Noto_Sans','Open_Sans',sans-serif] text-[11px] leading-4 text-black">
    <div className="flex min-h-[calc(100vh-2px)] flex-col rounded-t-lg border border-t-[#e4edf7] border-r-[#3cc4e0] border-b-[#3cc4e0] border-l-[#dfe9f5] bg-[#b9d1ea]">
      <div className="rounded-t-lg bg-linear-to-b from-[#9ab5d4] to-[#b9d1ea]">
        <TitleBar />
      </div>
      <div className="flex flex-1 bg-[linear-gradient(to_bottom,#b9d1ea_0,#dce9f7_90px,#b9d1ea_90px)] px-[9px] pb-[9px]">
        <div className="flex min-w-0 flex-1 bg-[#f0f0f0]">
          <StylePanel />
          <button type="button" aria-label="Skrýt panel" className="flex w-1.5 shrink-0 justify-center bg-[#f6f6f6] pt-1">
            <svg width="4" height="7" viewBox="0 0 4 7"><path d="M4 0v7L0 3.500z" fill="#222" /></svg>
          </button>
          <main className="flex min-w-0 flex-1 flex-col">
            <Toolbar />
            <div className="flex pr-5 pl-1.5">
              <button type="button" aria-label="Orientace" className={clsx(toolButton, 'mt-px mr-px h-[22px] w-[22px]')}>
                <OrientationIcon />
              </button>
              <div className="min-w-0 flex-1 overflow-hidden bg-white">
                <HorizontalRuler />
              </div>
            </div>
            <div className="flex flex-1 pl-[5px]">
              <div className="shrink-0 bg-white">
                <VerticalRuler />
              </div>
              <div className="flex min-w-0 flex-1 items-start overflow-hidden border border-t-[#6b6b6b] border-r-[#e0e0e0] border-b-[#e0e0e0] border-l-[#6b6b6b] bg-white pt-2">
                <RowHandles />
                <Schedule />
              </div>
              <div className="mr-[17px] w-1 border-r border-white" />
            </div>
            <StatusBar />
          </main>
        </div>
      </div>
    </div>
    <svg width="140" height="70" viewBox="0 0 140 70" className="pointer-events-none absolute top-0 left-[250px]">
      <rect x="6" y="38.500" width="17" height="25" fill="none" stroke="#e80a0a" strokeWidth="4" />
      <path
        d="M29 45L49 29c3-2 6 0 4 3l-4 6L126 18c5-1 7 6 2 8L55 47l4 2c2 2 0 4-2 4L30 48z"
        fill="#e80a0a"
      />
    </svg>
  </div>
);

export default App;
